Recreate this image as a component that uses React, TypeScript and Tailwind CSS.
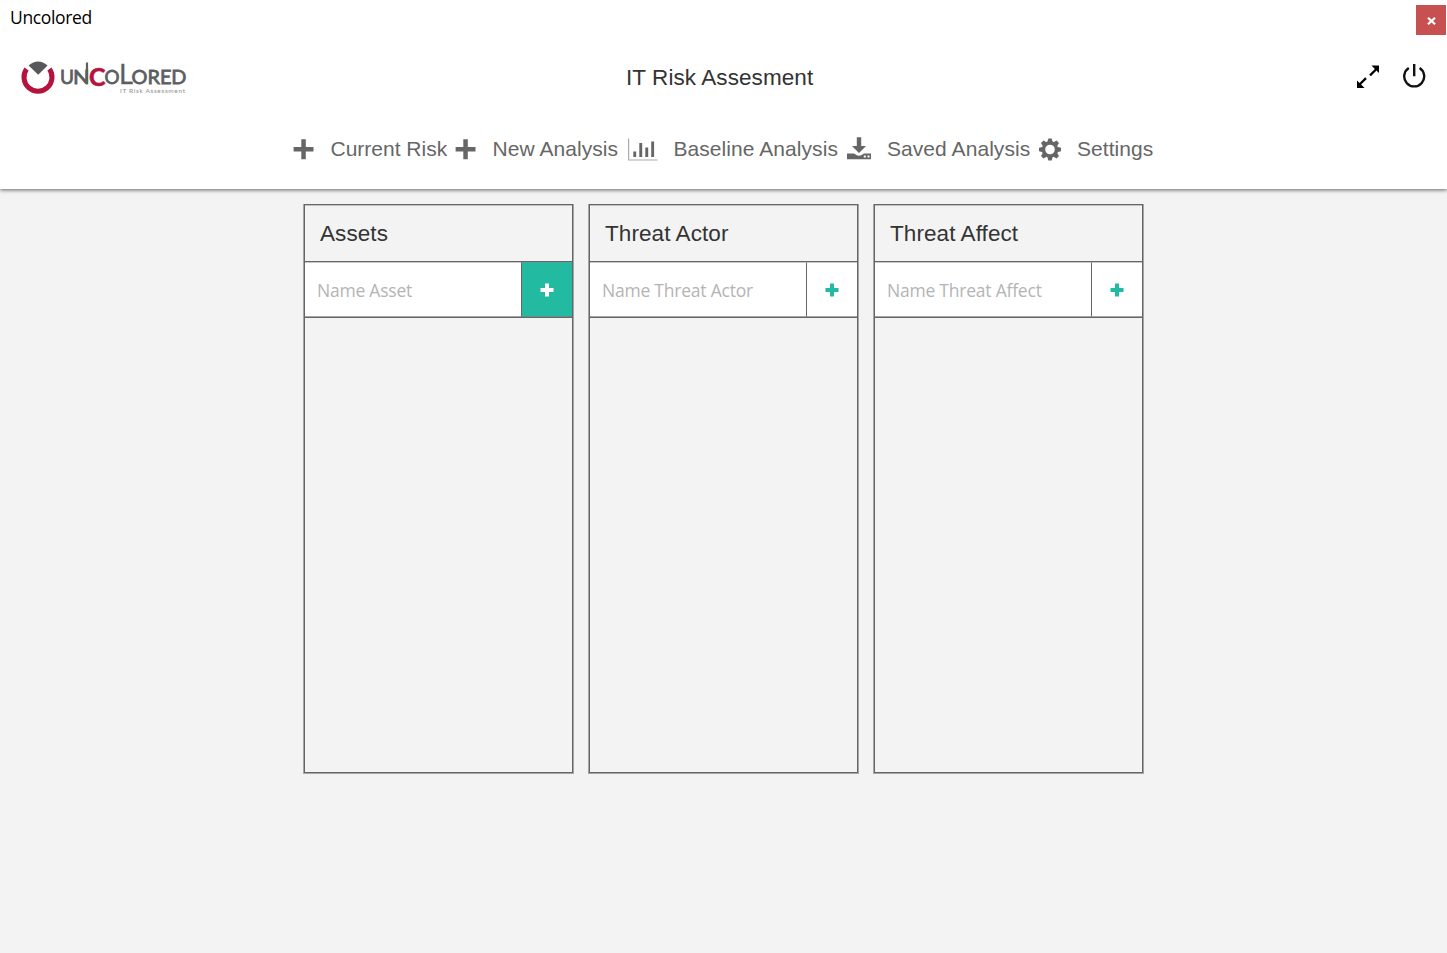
import React from "react";

const columns = [
  { title: "Assets", placeholder: "Name Asset", active: true },
  { title: "Threat Actor", placeholder: "Name Threat Actor", active: false },
  { title: "Threat Affect", placeholder: "Name Threat Affect", active: false },
];

function Logo() {
  return (
    <svg width="172" height="46" viewBox="18 54 172 46" className="block" fontFamily="Lato, sans-serif">
      <path d="M26.6 69 A14 14 0 1 0 49.4 69" fill="none" stroke="#b5123e" strokeWidth="5" />
      <path d="M28.6 65.5 Q38 57.5 47.6 65.5 L38.2 74.8 Z" fill="#56585c" />
      <g fill="#5c5e62" fontSize="20" fontWeight="400" stroke="#5c5e62" strokeWidth="0.8">
        <text x="60" y="84" textLength="14" lengthAdjust="spacingAndGlyphs">U</text>
        <text x="73" y="84" textLength="16.5" lengthAdjust="spacingAndGlyphs">N</text>
        <path d="M87 62.500V83.500" strokeWidth="2.2" />
        <text x="104.5" y="84" textLength="15" lengthAdjust="spacingAndGlyphs">O</text>
        <text x="119" y="84" fontSize="26" strokeWidth="0.3" textLength="14" lengthAdjust="spacingAndGlyphs">L</text>
        <text x="131.5" y="84" textLength="55" lengthAdjust="spacingAndGlyphs">ORED</text>
      </g>
      <text x="89" y="85.5" fontSize="24" fontWeight="700" fill="#b5123e" stroke="#b5123e" strokeWidth="0.6" textLength="16.5" lengthAdjust="spacingAndGlyphs">C</text>
      <text x="120" y="93.2" fontSize="6.500" fill="#8c8e90" textLength="65" lengthAdjust="spacing">IT Risk Assessment</text>
    </svg>
  );
}

function PlusIcon() {
  return (
    <svg width="21" height="21" viewBox="0 0 21 21" className="block" fill="#666">
      <path d="M8.300.3h4.500V8h7.700v4.400h-7.700v7.800H8.300v-7.800H.6V8h7.700z" />
    </svg>
  );
}

function ChartIcon() {
  return (
    <svg width="30" height="22" viewBox="0 0 30 22" className="block overflow-visible">
      <path d="M.6 .5v21.500H29.500" fill="none" stroke="#aaa" strokeWidth="1.2" />
      <path d="M5.300 13.500h2.900v5.500h-2.900zM11.300 5h2.900v14h-2.900zM17.300 9.500h2.900v9.500h-2.900zM23.200 3.500h2.900v15.500h-2.900z" fill="#666" />
    </svg>
  );
}

function DownloadIcon() {
  return (
    <svg width="24" height="22" viewBox="0 0 24 22" className="block overflow-visible">
      <path d="M9.800-.8h4.400V8H19l-7 7-7-7h4.800zM0 15.500h7c1.800 1.200 3 2.200 5 2.200s3.200-1 5-2.200h7v5.800H0z" fill="#666" />
      <path d="M16.800 17.400h2v2h-2zM20.500 17.400h2v2h-2z" fill="#fff" />
    </svg>
  );
}

function GearIcon() {
  return (
    <svg width="22" height="22" viewBox="-11 -11.500 22 22" className="block overflow-visible">
      <g fill="#666">
        {[0, 45, 90, 135].map((a) => (
          <path key={a} d="M-2.5-8l.8-3h3.4l.8 3v16l-.8 3h-3.4l-.8-3z" transform={`rotate(${a})`} />
        ))}
        <circle r="8.3" />
      </g>
      <circle r="4.8" fill="#fff" />
    </svg>
  );
}

function NavItem({ icon, label, width, gap }: { icon: React.ReactNode; label: string; width: string; gap: string }) {
  return (
    <a className={`flex h-6 shrink-0 items-center whitespace-nowrap ${width}`}>
      <span className={`shrink-0 ${gap}`}>{icon}</span>
      <span>{label}</span>
    </a>
  );
}

function SmallPlus() {
  return (
    <svg width="14" height="14" viewBox="0 0 14 14" className="block" fill="currentColor">
      <path d="M5 .5h4V5h4.500v4H9v4.500H5V9H.5V5H5z" />
    </svg>
  );
}

export default function App() {
  return (
    <div className="flex h-[953px] w-[1447px] flex-col overflow-hidden bg-[#f3f3f3] font-['Liberation_Sans',Arial,sans-serif]">
      <header className="relative z-10 h-[189px] shrink-0 bg-white shadow-[0_1px_4px_rgba(0,0,0,0.6)]">
        <div className="flex h-10 items-start justify-between pl-[10px] pr-px">
          <span className="pt-[5px] font-['Open_Sans',sans-serif] text-[17.5px] leading-[25px] tracking-[-0.35px] text-black">Uncolored</span>
          <button className="mt-[5px] flex h-[30px] w-[30px] items-center justify-center bg-[#c75050]">
            <svg width="9" height="8" viewBox="0 0 9 8" className="mt-px block">
              <path d="M1 .8l7 6.4M8 .8L1 7.2" stroke="#fff" strokeWidth="2.2" />
            </svg>
          </button>
        </div>
        <div className="grid h-[76px] grid-cols-[600px_1fr_600px] items-start pl-[18px] pr-[19px]">
          <div className="pt-[14px]"><Logo /></div>
          <h1 className="whitespace-nowrap pl-[8px] pt-[25px] text-[22.5px] leading-[26px] tracking-[0.08px] text-[#333]">IT Risk Assesment</h1>
          <div className="flex items-start justify-end gap-[22px] pr-[2px] pt-[24px] text-black">
            <svg width="24" height="24" viewBox="0 0 24 24" className="mt-px block">
              <path d="M23 .500v7.500l-2.500-2.500-5.700 5.700-1.600-1.600 5.700-5.700L15.500 .500zM1 23v-7.500l2.500 2.500 5.700-5.700 1.600 1.600-5.700 5.700L8.500 23z" />
            </svg>
            <svg width="24" height="24" viewBox="0 0 24 24" className="block" fill="none" stroke="#111" strokeWidth="2.4">
              <path d="M12.200 0v12.300M6.800 4a10 10 0 1 0 10.800 0" />
            </svg>
          </div>
        </div>
        <nav className="flex h-[66px] items-center pl-[293px] text-[21px] leading-6 tracking-[0.06px] text-[#666]">
          <NavItem icon={<PlusIcon />} label="Current Risk" width="w-[162px] tracking-normal" gap="mr-[16.500px]" />
          <NavItem icon={<PlusIcon />} label="New Analysis" width="w-[173px]" gap="mr-[16.500px]" />
          <NavItem icon={<ChartIcon />} label="Baseline Analysis" width="w-[219px]" gap="mr-[15.500px]" />
          <NavItem icon={<DownloadIcon />} label="Saved Analysis" width="w-[192px]" gap="mr-4" />
          <NavItem icon={<GearIcon />} label="Settings" width="w-[120px]" gap="mr-4" />
        </nav>
      </header>
      <main className="flex gap-[14px] pl-[303px] pt-[15px]">
        {columns.map((c) => (
          <section key={c.title} className="flex h-[570px] w-[271px] flex-col border border-t-0 border-[#a5a5a5]">
            <div className="flex grow flex-col border border-[#666]">
              <h2 className="h-14 border-t border-[#c0c0c0] pl-[15px] pt-[15px] text-[22.5px] leading-[26px] tracking-[0.08px] text-[#333]">{c.title}</h2>
              <div className="flex h-[57px] border-y border-[#666] bg-white">
                <input
                  placeholder={c.placeholder}
                  className="w-[216px] border-b border-t border-b-[#a5a5a5] border-t-[#c8c8c8] pl-3 pt-[2px] font-['Open_Sans',sans-serif] text-[17.5px] tracking-[-0.22px] text-[#333] outline-none placeholder:text-[#b4b4b4] placeholder:opacity-100"
                />
                <button
                  className={
                    c.active
                      ? "flex grow items-center justify-center border-y border-l border-b-[#5f9088] border-l-[#666] border-t-[#48a898] bg-[#22baa0] text-white"
                      : "flex grow items-center justify-center border-y border-l border-b-[#a5a5a5] border-l-[#666] border-t-[#c8c8c8] bg-white text-[#22baa0]"
                  }
                >
                  <SmallPlus />
                </button>
              </div>
            </div>
          </section>
        ))}
      </main>
    </div>
  );
}
